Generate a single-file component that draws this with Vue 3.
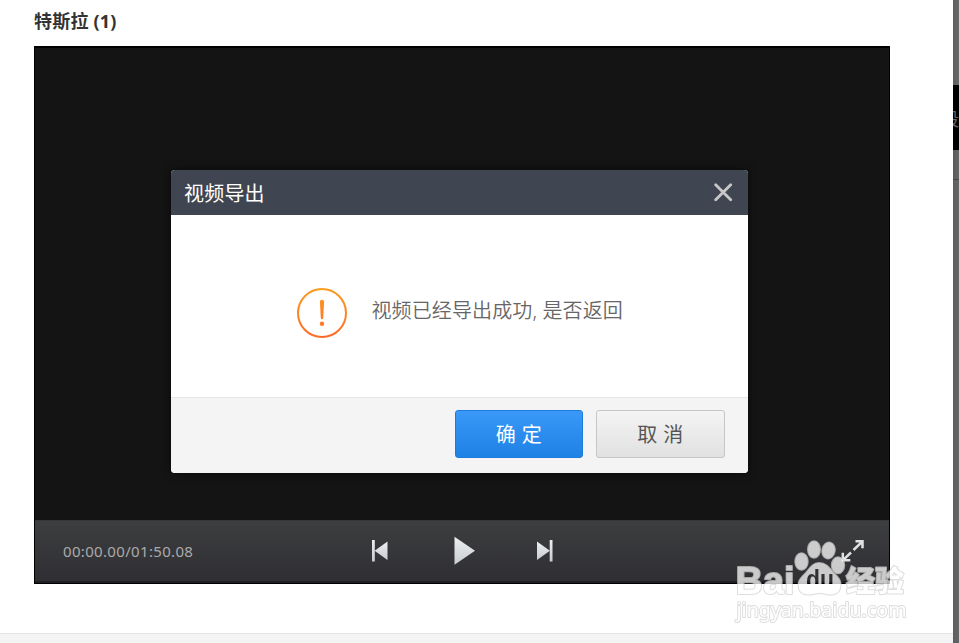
<script setup>
import { ref } from 'vue'

const title = ref('特斯拉 (1)')
const time = ref('00:00.00/01:50.08')
const open = ref(true)
</script>

<template>
  <div class="page">
    <main class="panel">
      <div class="content">
        <h1 class="title">{{ title }}</h1>
        <section class="player">
          <div class="screen"></div>
          <div class="controls">
            <span class="time">{{ time }}</span>
            <svg class="transport" width="184" height="30" viewBox="0 0 184 30">
              <defs>
                <linearGradient id="metal" x1="0" y1="0" x2="0" y2="1">
                  <stop offset="0" stop-color="#eceeef" />
                  <stop offset="1" stop-color="#c9cdd0" />
                </linearGradient>
              </defs>
              <g fill="url(#metal)">
                <path d="M2 4h2.8v21.500H2z" />
                <path d="M17.500 5.500v18.500L4.600 14.700z" />
                <path d="M84.500 .8v28L105 14.800z" />
                <path d="M167 5.500v18.500l12.900-9.200z" />
                <path d="M179.700 4h2.800v21.500h-2.800z" />
              </g>
            </svg>
            <svg class="expand" width="25" height="24" viewBox="0 0 25 24" fill="none" stroke="#dfe1e2" stroke-width="2.500">
              <path d="M16.500 2.300h7v7M23 2.800l-8.500 8.200M12 13.500L4 21.200M3.800 13.700v7.500h7.500" />
            </svg>
          </div>
        </section>
      </div>
      <footer class="foot"></footer>
    </main>
    <aside class="edge">
      <div class="edge-top"></div>
      <div class="edge-dark"><span>段</span></div>
      <div class="edge-mid"></div>
      <div class="edge-rest"></div>
    </aside>

    <div v-if="open" class="dialog">
      <header class="dialog-head">
        <span>视频导出</span>
        <svg class="close" width="20" height="20" viewBox="0 0 20 20" @click="open = false">
          <path d="M2.700 1.800l15 15M17.700 1.800l-15 15" stroke="#c8c8c8" stroke-width="2.800" stroke-linecap="round" />
        </svg>
      </header>
      <div class="dialog-body">
        <svg class="warn" width="50" height="50" viewBox="0 0 50 50">
          <defs>
            <linearGradient id="amber" gradientUnits="userSpaceOnUse" x1="0" y1="0" x2="0" y2="50">
              <stop offset="0" stop-color="#fb9d20" />
              <stop offset="1" stop-color="#ff6a28" />
            </linearGradient>
          </defs>
          <circle cx="25" cy="25" r="24" fill="none" stroke="url(#amber)" stroke-width="2" />
          <path d="M22.900 13.500q0-1.800 2.100-1.800t2.100 1.800l-.9 16.500q-.1 1.300-1.200 1.300t-1.200-1.300z" fill="url(#amber)" />
          <circle cx="25" cy="35.800" r="2.200" fill="url(#amber)" />
        </svg>
        <span class="message">视频已经导出成功, 是否返回</span>
      </div>
      <div class="dialog-foot">
        <button class="btn primary">确 定</button>
        <button class="btn">取 消</button>
      </div>
    </div>

    <svg class="watermark" width="184" height="94" viewBox="0 0 184 94">
      <defs>
        <mask id="cutout" maskUnits="userSpaceOnUse" x="0" y="0" width="184" height="94">
          <rect width="184" height="94" fill="#fff" />
          <text x="75" y="54" class="du" textLength="28" lengthAdjust="spacingAndGlyphs">du</text>
        </mask>
      </defs>
      <g class="mark">
        <ellipse cx="70.500" cy="26.500" rx="6.200" ry="8.300" />
        <ellipse cx="83" cy="14.500" rx="6" ry="8.300" />
        <ellipse cx="97.500" cy="15.500" rx="6.200" ry="8" transform="rotate(12 97.500 15.500)" />
        <ellipse cx="107" cy="30.300" rx="6.200" ry="8" />
        <path mask="url(#cutout)" d="M88 28c-6 0-9 5-13 10-4 4-7.500 7-7.500 12 0 6 4 9.500 9 9.500 5 0 8-1.500 12-1.500s7 1.500 12 1.500 9-3.500 9-9.500c0-6-3-8-7-12-4-5-7.500-10-14.500-10z" />
        <text x="4.500" y="58.500" class="latin" textLength="59" lengthAdjust="spacingAndGlyphs">Bai</text>
        <text x="115" y="56.500" class="cjk" textLength="58" lengthAdjust="spacingAndGlyphs">经验</text>
      </g>
      <text x="5.500" y="81.500" class="url" textLength="170" lengthAdjust="spacingAndGlyphs">jingyan.baidu.com</text>
    </svg>
  </div>
</template>

<style>
body {
  margin: 0;
  overflow: hidden;
}
</style>

<style scoped>
.page {
  position: relative;
  display: flex;
  width: 959px;
  height: 643px;
  overflow: hidden;
  background: #fff;
  font-family: "Noto Sans", "Noto Sans CJK SC", sans-serif;
}
.panel {
  width: 953px;
  display: flex;
  flex-direction: column;
}
.content {
  flex: 1;
  padding: 0 63px 0 34px;
}
.title {
  box-sizing: border-box;
  margin: 0;
  height: 46px;
  line-height: 42px;
  font-size: 18px;
  font-weight: 700;
  letter-spacing: 0.2px;
  color: #333;
}
.player {
  box-sizing: border-box;
  height: 538px;
  border: 1px solid #000;
  border-top-width: 2px;
  display: flex;
  flex-direction: column;
  background: #141414;
}
.screen {
  flex: 1;
}
.controls {
  box-sizing: border-box;
  height: 63px;
  padding: 0 25px 0 28px;
  display: flex;
  align-items: center;
  border-top: 1px solid #363739;
  border-bottom: 2px solid #1f2023;
  background: linear-gradient(#3d3e40, #2f2f33);
}
.time {
  width: 307px;
  font-size: 15px;
  letter-spacing: 0.33px;
  color: #aaa;
}
.transport {
  flex: none;
}
.expand {
  margin-left: auto;
}
.foot {
  height: 9px;
  border-top: 1px solid #e2e2e2;
  background: #f4f4f4;
}
.edge {
  width: 6px;
  display: flex;
  flex-direction: column;
  overflow: hidden;
  background: #666;
}
.edge-top {
  height: 85px;
  background: linear-gradient(90deg, #5e5e5e, #696969);
}
.edge-dark {
  height: 65px;
  display: flex;
  align-items: center;
  justify-content: flex-end;
  overflow: hidden;
  background: #000;
  color: #666;
  font-size: 18px;
}
.edge-mid {
  height: 29px;
  border-bottom: 1px solid #484848;
  background: linear-gradient(90deg, #5a5a5a, #666);
}
.edge-rest {
  flex: 1;
  background: linear-gradient(90deg, #5d5e5f, #656667);
}
.dialog {
  position: absolute;
  left: 171px;
  top: 170px;
  width: 577px;
  height: 303px;
  display: flex;
  flex-direction: column;
  border-radius: 4px;
  overflow: hidden;
  background: #fff;
  box-shadow: 0 0 8px rgba(0, 0, 0, 0.6);
}
.dialog-head {
  box-sizing: border-box;
  height: 45px;
  padding: 0 15px 0 13px;
  display: flex;
  align-items: center;
  justify-content: space-between;
  background: #404651;
  color: #fff;
  font-size: 20px;
  letter-spacing: 0.2px;
}
.close {
  cursor: pointer;
}
.dialog-body {
  height: 182px;
  display: flex;
  align-items: flex-start;
  padding-left: 126px;
}
.warn {
  margin-top: 73px;
}
.message {
  margin: 82px 0 0 24.5px;
  font-size: 20px;
  font-weight: 350;
  line-height: 28px;
  letter-spacing: 0.12px;
  color: #666;
  white-space: nowrap;
}
.dialog-foot {
  box-sizing: border-box;
  height: 76px;
  padding: 12px 23px 0 0;
  display: flex;
  justify-content: flex-end;
  gap: 13px;
  border-top: 1px solid #e6e6e6;
  background: #f4f4f4;
}
.btn {
  box-sizing: border-box;
  width: 129px;
  height: 48px;
  padding: 0 0 2px;
  border: 1px solid #c6c6c6;
  border-radius: 3px;
  background: linear-gradient(#f4f4f4, #e1e1e1);
  color: #555;
  font-family: inherit;
  font-size: 20px;
  letter-spacing: 0.4px;
}
.btn.primary {
  width: 128px;
  border-color: #1b7cdc;
  background: linear-gradient(#3a99f8, #1e81e4);
  color: #fff;
}
.watermark {
  position: absolute;
  left: 731px;
  top: 535px;
  opacity: 0.75;
}
.mark {
  fill: #fff;
  stroke: #d2d2d2;
  stroke-width: 2;
  stroke-linejoin: round;
  paint-order: stroke;
}
.latin {
  font: 700 38px "Liberation Sans", sans-serif;
}
.cjk {
  font: 900 29px "Noto Sans CJK SC", sans-serif;
}
.du {
  font: 700 28px "Liberation Sans", sans-serif;
  fill: #000;
  stroke: none;
}
.url {
  font: 400 20px "Noto Sans", sans-serif;
  fill: #fff;
  stroke: #d2d2d2;
  stroke-width: 2;
  stroke-linejoin: round;
  paint-order: stroke;
}
</style>
